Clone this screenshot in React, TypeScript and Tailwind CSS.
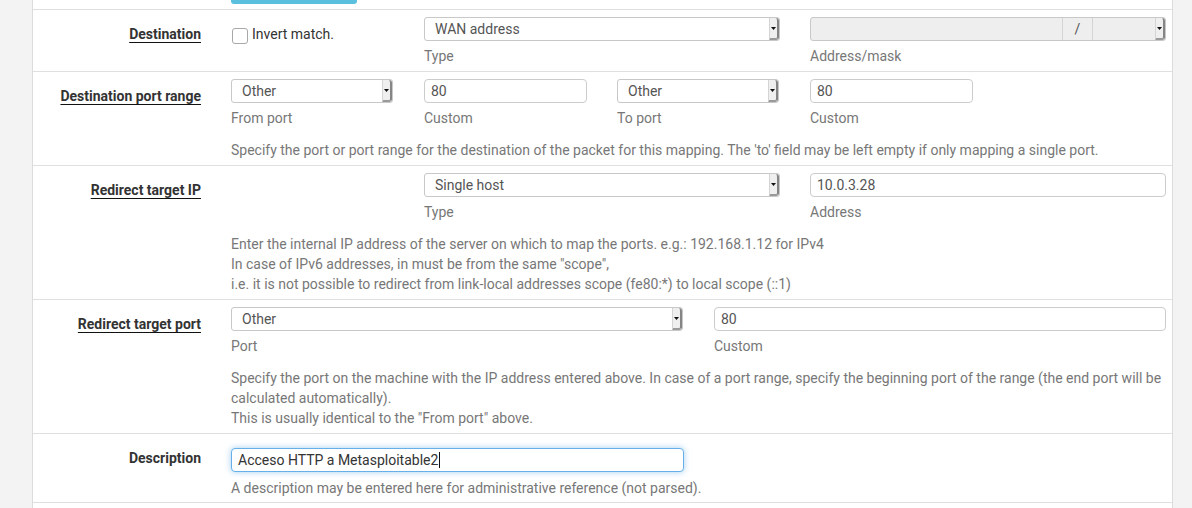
import React from "react";

const Arrow = () => (
  <div className="flex w-[10px] shrink-0 items-center justify-center self-stretch rounded-r-[3px] border-l border-[#d4d4d4] border-r-2 border-b-2 border-r-[#858585] border-b-[#9a9a9a] bg-[#efefef]">
    <svg width="5" height="3" viewBox="0 0 5 3">
      <path d="M0 0 H5 L2.5 3 Z" fill="#111" />
    </svg>
  </div>
);

const Select = ({ value, w }: { value: string; w: string }) => (
  <div className={`flex h-[24px] ${w} items-stretch rounded-[3px] border border-[#c8c8c8] bg-white`}>
    <div className="flex flex-1 items-center pl-[10px] text-[#555]">{value}</div>
    <Arrow />
  </div>
);

const Input = ({ value, w }: { value: string; w: string }) => (
  <div className={`flex h-[24px] ${w} items-center rounded-[4px] border border-[#cccccc] bg-white pl-[6px] text-[#555]`}>
    {value}
  </div>
);

const Sub = ({ children }: { children: React.ReactNode }) => (
  <div className="mt-[5px] h-[20px] leading-[20px] text-[#777]">{children}</div>
);

const Label = ({ text, u = true, pt = "pt-[7px]" }: { text: string; u?: boolean; pt?: string }) => (
  <div className={`w-[168px] shrink-0 text-right font-bold leading-[20px] text-[#333] ${pt}`}>
    <span className={u ? "underline decoration-[#111] decoration-1 underline-offset-[3px]" : ""}>{text}</span>
  </div>
);

export default function App() {
  return (
    <div
      className="flex h-[508px] w-[1192px] overflow-hidden bg-[#f3f3f3] text-[14px] leading-[20px]"
      style={{ fontFamily: "Roboto, 'Liberation Sans', sans-serif" }}
    >
      <div className="w-[32px] shrink-0" />
      <div className="flex w-[1141px] shrink-0 flex-col border-x border-[#dcdcdc] bg-white">
        {/* top strip */}
        <div className="h-[10px] shrink-0 border-b border-[#e0e0e0]">
          <div className="ml-[198px] h-[4px] w-[126px] rounded-b-[3px] bg-[#5bc0de]" />
        </div>

        {/* Destination */}
        <div className="flex h-[62px] shrink-0 border-b border-[#e0e0e0] pt-[7px]">
          <Label text="Destination" />
          <div className="ml-[30px] flex">
            <div className="flex w-[193px] items-start pt-[11px]">
              <div className="ml-[1px] h-[16px] w-[16px] rounded-[3px] border border-[#a8a8a8] bg-white" />
              <span className="ml-[4px] mt-[-4px] text-[#333]">Invert match.</span>
            </div>
            <div className="w-[386px]">
              <Select value="WAN address" w="w-[356px]" />
              <Sub>Type</Sub>
            </div>
            <div className="w-[356px]">
              <div className="flex h-[24px] w-[356px] items-stretch rounded-[3px] border border-[#c8c8c8] bg-[#eeeeee]">
                <div className="flex-1" />
                <div className="flex w-[31px] items-center justify-center border-x border-[#d4d4d4] text-[#555]">/</div>
                <div className="w-[62px]" />
                <Arrow />
              </div>
              <Sub>Address/mask</Sub>
            </div>
          </div>
        </div>

        {/* Destination port range */}
        <div className="flex h-[94px] shrink-0 border-b border-[#e0e0e0] pt-[7px]">
          <Label text="Destination port range" />
          <div className="ml-[30px] flex flex-col">
            <div className="flex gap-[31px]">
              <div className="w-[162px]">
                <Select value="Other" w="w-[162px]" />
                <Sub>From port</Sub>
              </div>
              <div className="w-[162px]">
                <Input value="80" w="w-[163px]" />
                <Sub>Custom</Sub>
              </div>
              <div className="w-[162px]">
                <Select value="Other" w="w-[162px]" />
                <Sub>To port</Sub>
              </div>
              <div className="w-[162px]">
                <Input value="80" w="w-[163px]" />
                <Sub>Custom</Sub>
              </div>
            </div>
            <div className="mt-[12px] whitespace-nowrap text-[#777]">
              Specify the port or port range for the destination of the packet for this mapping. The 'to' field may be left empty if only mapping a single port.
            </div>
          </div>
        </div>

        {/* Redirect target IP */}
        <div className="flex h-[134px] shrink-0 border-b border-[#e0e0e0] pt-[7px]">
          <Label text="Redirect target IP" />
          <div className="ml-[30px] flex flex-col">
            <div className="flex">
              <div className="w-[193px]" />
              <div className="w-[386px]">
                <Select value="Single host" w="w-[356px]" />
                <Sub>Type</Sub>
              </div>
              <div className="w-[356px]">
                <Input value="10.0.3.28" w="w-[356px]" />
                <Sub>Address</Sub>
              </div>
            </div>
            <div className="mt-[12px] whitespace-nowrap text-[#777]">
              Enter the internal IP address of the server on which to map the ports. e.g.: 192.168.1.12 for IPv4
              <br />
              In case of IPv6 addresses, in must be from the same "scope",
              <br />
              i.e. it is not possible to redirect from link-local addresses scope (fe80:*) to local scope (::1)
            </div>
          </div>
        </div>

        {/* Redirect target port */}
        <div className="flex h-[134px] shrink-0 border-b border-[#e0e0e0] pt-[7px]">
          <Label text="Redirect target port" />
          <div className="ml-[30px] flex flex-col">
            <div className="flex gap-[31px]">
              <div className="w-[452px]">
                <Select value="Other" w="w-[452px]" />
                <Sub>Port</Sub>
              </div>
              <div className="w-[452px]">
                <Input value="80" w="w-[452px]" />
                <Sub>Custom</Sub>
              </div>
            </div>
            <div className="mt-[12px] whitespace-nowrap text-[#777]">
              Specify the port on the machine with the IP address entered above. In case of a port range, specify the beginning port of the range (the end port will be
              <br />
              calculated automatically).
              <br />
              This is usually identical to the "From port" above.
            </div>
          </div>
        </div>

        {/* Description */}
        <div className="flex h-[69px] shrink-0 border-b border-[#e0e0e0] pt-[14px]">
          <Label text="Description" u={false} pt="pt-0" />
          <div className="ml-[30px] flex flex-col">
            <div className="flex h-[24px] w-[453px] items-center rounded-[4px] border border-[#66afe9] bg-white pl-[6px] text-[#333] shadow-[0_0_6px_rgba(102,175,233,0.6)]">
              Acceso HTTP a Metasploitable2
              <span className="ml-[1px] inline-block h-[16px] w-[1px] bg-[#111]" />
            </div>
            <div className="mt-[6px] text-[#777]">
              A description may be entered here for administrative reference (not parsed).
            </div>
          </div>
        </div>

        <div className="flex-1" />
      </div>
      <div className="flex-1" />
    </div>
  );
}
